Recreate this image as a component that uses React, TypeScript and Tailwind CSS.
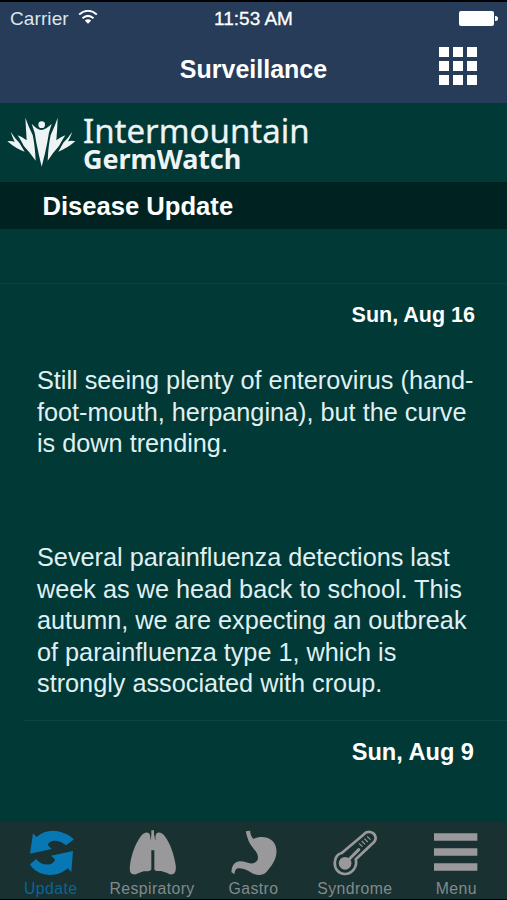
import type { ReactNode } from 'react';
import clsx from 'clsx';

const tabs: { label: string; viewBox: string; active?: boolean; icon: ReactNode }[] = [
  {
    label: 'Update',
    viewBox: '77 35 150 150',
    active: true,
    icon: (
      <>
        <path d="M98 54L109 65C128 48 153 43 178 49C199 55 214 64 221 72L197 90C187 81 171 75 156 77C149 79 144 84 142 89L154 101L89 115Z" />
        <path d="M89 147L108 131C117 144 133 150 149 147C157 145 163 139 164 132L152 121L218 107L213 170L202 159C184 175 158 183 132 177C108 172 95 158 89 147Z" />
      </>
    ),
  },
  {
    label: 'Respiratory',
    viewBox: '81 35 150 150',
    icon: (
      <path d="M154 45H162V56C164 66 165 73 167 76C166 68 165 60 170 54C177 48 187 53 194 62C211 84 222 119 227 149C229 164 226 176 217 177C208 179 202 171 190 169C178 166 167 171 163 162V105H154V162C150 171 138 166 127 169C116 171 109 179 100 177C90 176 88 164 90 149C94 119 106 84 123 62C130 53 140 48 147 54C152 60 151 68 151 76C153 70 154 62 154 56Z" />
    ),
  },
  {
    label: 'Gastro',
    viewBox: '85.5 35 150 150',
    icon: (
      <path d="M139 48L152 46C152 55 155 65 162 71C174 64 191 63 205 68C222 75 231 89 231 108C231 133 216 153 200 171C190 181 172 181 157 173C145 165 130 157 115 159C108 161 105 168 105 177L96 171C96 151 106 139 121 138C138 138 148 147 160 144C174 141 179 130 173 115C167 103 154 93 147 76C144 67 140 57 139 48Z" />
    ),
  },
  {
    label: 'Syndrome',
    viewBox: '89.7 35 150 150',
    icon: (
      <>
        <path
          d="M125 113L190 58C196 51 205 48 213 51C226 55 231 69 222 80L167 132C172 153 158 176 134 176C116 176 103 161 104 142C104 125 115 115 125 113Z"
          fill="none"
          stroke="currentColor"
          strokeWidth="8"
          strokeLinejoin="round"
        />
        <circle cx="135" cy="144" r="19" />
        <path d="M142 137L176 103" stroke="currentColor" strokeWidth="9" strokeLinecap="round" />
        <path d="M177 84L187 94M185 77L195 87M193 70L203 80M201 63L211 73" stroke="currentColor" strokeWidth="3.5" />
      </>
    ),
  },
  {
    label: 'Menu',
    viewBox: '94 35 150 150',
    icon: <path d="M103 54H233V76H103ZM103 99H233V121H103ZM103 144H233V166H103Z" />,
  },
];

function StatusBar() {
  return (
    <div className="grid h-[34px] grid-cols-3 text-[19px] leading-[34px]">
      <div className="flex items-start gap-[9px] pl-[10px]">
        <span className="tracking-[0.1px] text-[#dbe5ef]">Carrier</span>
        <svg viewBox="0 0 60 46" className="mt-2 h-[15px] w-5" fill="none" stroke="white" strokeWidth="6">
          <path d="M3 14Q30 -9 57 14M13 25Q30 11 47 25" />
          <path d="M20 32Q30 25 40 32L30 42Z" fill="white" stroke="none" />
        </svg>
      </div>
      <span className="text-center whitespace-nowrap [-webkit-text-stroke:0.3px_white]">11:53 AM</span>
      <div className="flex h-8 items-center justify-end pr-[9px]">
        <div className="h-[15px] w-[35px] rounded-[2px] bg-white" />
        <div className="ml-px h-[5px] w-[3px] rounded-r-full bg-white" />
      </div>
    </div>
  );
}

function Logo() {
  return (
    <div className="flex h-[79px] items-start pl-[7px]">
      <svg viewBox="20 47 207 153" className="mt-[13px] h-[51px] w-[69px] shrink-0" fill="#eef3f3">
        <circle cx="124" cy="73" r="10" />
        <path d="M94 70Q109 87 123 89Q137 88 154 70Q144 97 141 126Q134 163 124 199Q115 162 108 127Q105 96 94 70Z" />
        <path d="M75 52Q83 75 97 104Q104 136 106 181Q89 157 71 138Q63 122 52 105Q67 110 79 120Q77 85 75 52Z" />
        <path d="M172 52Q171 87 168 120Q180 110 195 105Q184 122 176 137Q158 157 142 181Q144 136 151 104Q164 77 172 52Z" />
        <path d="M31 94Q42 112 57 127L73 154Q49 147 21 123Q34 121 43 125Q36 110 31 94Z" />
        <path d="M216 94Q210 111 203 123Q214 120 225 123Q199 145 174 154L189 127Q204 112 216 94Z" />
      </svg>
      <div className="pl-[7px] text-[#eef3f3]">
        <div className="mt-[11px] h-[33px] font-['Noto_Sans'] text-[33px] leading-[33px] whitespace-nowrap [-webkit-text-stroke:0.3px_#eef3f3]">
          Intermountain
        </div>
        <div className="-mt-[3px] font-['Noto_Sans'] text-[27px] leading-[30px] font-bold tracking-[-0.1px] whitespace-nowrap">
          GermWatch
        </div>
      </div>
    </div>
  );
}

export default function App() {
  return (
    <div className="flex h-[900px] w-[507px] flex-col overflow-hidden border-t-2 border-b border-black bg-[#003936] font-['Liberation_Sans',Arial,sans-serif] text-white">
      <header className="h-[101px] shrink-0 bg-[#273c58]">
        <StatusBar />
        <div className="relative flex h-[66px] justify-center">
          <h1 className="text-[25px] leading-[66px] font-bold">Surveillance</h1>
          <div className="absolute top-[11px] right-[30px] grid grid-cols-3 gap-1">
            {Array.from({ length: 9 }, (_, i) => (
              <div key={i} className="size-[10px] bg-white" />
            ))}
          </div>
        </div>
      </header>

      <Logo />

      <h2 className="h-[47px] shrink-0 bg-[#002321] pl-[42.5px] text-[25.6px] leading-[49px] font-bold">Disease Update</h2>

      <main className="flex-1 overflow-hidden">
        <div className="h-[55px] border-b border-[#0b413e]" />
        <article className="pt-4">
          <div className="pr-8 text-right text-[21.5px] leading-[31px] font-bold">Sun, Aug 16</div>
          <div className="pt-[34px] pl-[37px] text-[25.25px] leading-[31.6px] whitespace-nowrap text-[#e0f0f2]">
            <p>
              Still seeing plenty of enterovirus (hand-
              <br />
              foot-mouth, herpangina), but the curve
              <br />
              is down trending.
            </p>
            <p className="mt-[82.2px]">
              Several parainfluenza detections last
              <br />
              week as we head back to school. This
              <br />
              autumn, we are expecting an outbreak
              <br />
              of parainfluenza type 1, which is
              <br />
              strongly associated with croup.
            </p>
          </div>
        </article>
        <article className="mt-[20.5px] ml-6 border-t border-[#0d4542] pt-4">
          <div className="pr-[33px] text-right text-[23.6px] leading-[30px] font-bold">Sun, Aug 9</div>
        </article>
      </main>

      <nav className="grid h-[77px] shrink-0 grid-cols-5 bg-[#193130]">
        {tabs.map((tab) => (
          <button
            key={tab.label}
            className={clsx('flex flex-col items-center pt-[4.7px]', tab.active ? 'text-[#0878b5]' : 'text-[#99999b]')}
          >
            <svg viewBox={tab.viewBox} className="size-[50px] shrink-0" fill="currentColor">
              {tab.icon}
            </svg>
            <span
              className={clsx(
                'mt-0.5 text-[15.8px] leading-5 tracking-[0.4px]',
                tab.active ? 'text-[#07669b]' : 'text-[#808b8b]',
              )}
            >
              {tab.label}
            </span>
          </button>
        ))}
      </nav>
    </div>
  );
}
